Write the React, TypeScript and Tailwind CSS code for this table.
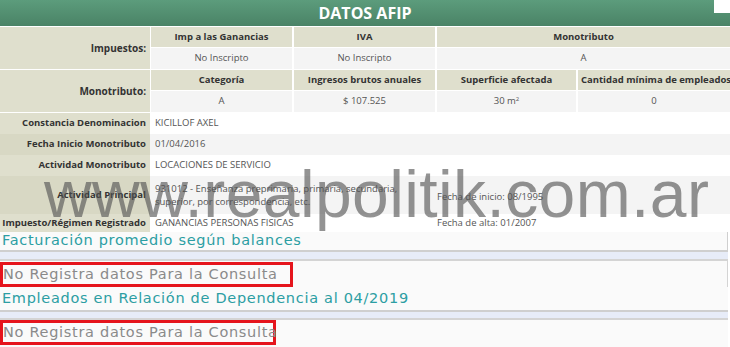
import React from "react";

const beige = "bg-[#dfdfcd]";
const beigeDark = "bg-[#d8d8c4]";

const HeadCell = ({ children }: { children: React.ReactNode }) => (
  <div className={`${beige} h-[20px] flex items-center justify-center font-bold text-[#333] whitespace-nowrap overflow-hidden`}>
    {children}
  </div>
);

const ValCell = ({ children }: { children: React.ReactNode }) => (
  <div className="bg-[#f4f4f4] h-[21px] flex items-center justify-center text-[#555] whitespace-nowrap">
    {children}
  </div>
);

const InfoRow = ({
  label,
  dark,
  grey,
  h,
  children,
}: {
  label: string;
  dark?: boolean;
  grey?: boolean;
  h: string;
  children: React.ReactNode;
}) => (
  <div className={`flex ${h}`}>
    <div className={`w-[150px] shrink-0 ${dark ? beigeDark : beige} flex items-center justify-end pr-[4px] font-bold text-[#333] whitespace-nowrap`}>
      {label}
    </div>
    <div className={`flex-1 pl-[5px] flex items-center text-[#555] ${grey ? "bg-[#f4f4f4]" : "bg-white"}`}>
      {children}
    </div>
  </div>
);

const NoData = ({ w }: { w: string }) => (
  <div className={`${w} h-[25px] border-[3px] border-[#e5141c] flex items-center whitespace-nowrap overflow-visible text-[#8a8a8a]`}>
    No Registra datos Para la Consulta
  </div>
);

const App = () => {
  return (
    <div className="relative w-[730px] h-[347px] overflow-hidden bg-white">
      {/* header */}
      <div className="relative h-[26px] bg-gradient-to-b from-[#5c9c7c] to-[#4a8366] flex items-center justify-center">
        <span className="text-white font-bold text-[16px] font-['Open_Sans',sans-serif]">DATOS AFIP</span>
        <div className="absolute right-0 top-0 w-[16px] h-[13px] bg-white" />
      </div>

      <div className="font-['Open_Sans',sans-serif] text-[9.5px] pt-[1px] flex flex-col gap-[1px]">
        {/* Impuestos */}
        <div className="flex gap-[1px]">
          <div className={`w-[150px] shrink-0 ${beige} flex items-center justify-end pr-[4px] font-bold text-[10px] text-[#333]`}>
            Impuestos:
          </div>
          <div className="flex-1 grid grid-cols-[141px_141px_1fr] gap-x-[2px] gap-y-[1px]">
            <HeadCell>Imp a las Ganancias</HeadCell>
            <HeadCell>IVA</HeadCell>
            <HeadCell>Monotributo</HeadCell>
            <ValCell>No Inscripto</ValCell>
            <ValCell>No Inscripto</ValCell>
            <ValCell>A</ValCell>
          </div>
        </div>

        {/* Monotributo */}
        <div className="flex gap-[1px]">
          <div className={`w-[150px] shrink-0 ${beige} flex items-center justify-end pr-[4px] font-bold text-[10px] text-[#333]`}>
            Monotributo:
          </div>
          <div className="flex-1 grid grid-cols-[141px_141px_139px_1fr] gap-x-[2px] gap-y-[1px]">
            <HeadCell>Categoría</HeadCell>
            <HeadCell>Ingresos brutos anuales</HeadCell>
            <HeadCell>Superficie afectada</HeadCell>
            <HeadCell>
              <span className="pl-[4px]">Cantidad mínima de empleados</span>
            </HeadCell>
            <ValCell>A</ValCell>
            <ValCell>$ 107.525</ValCell>
            <ValCell>
              <span>
                30 m<sup className="text-[6px]">2</sup>
              </span>
            </ValCell>
            <ValCell>0</ValCell>
          </div>
        </div>

        <div className="flex flex-col">
          <InfoRow label="Constancia Denominacion" h="h-[21px]">KICILLOF AXEL</InfoRow>
          <InfoRow label="Fecha Inicio Monotributo" h="h-[21px]" dark grey>01/04/2016</InfoRow>
          <InfoRow label="Actividad Monotributo" h="h-[21px]">LOCACIONES DE SERVICIO</InfoRow>
          <InfoRow label="Actividad Principal" h="h-[38px]" dark grey>
            <div className="w-[277px] leading-[13px]">
              931012 - Enseñanza preprimaria, primaria, secundaria, superior, por correspondencia, etc.
            </div>
            <div className="pl-[5px] pt-[4px]">Fecha de inicio: 08/1995</div>
          </InfoRow>
          <InfoRow label="Impuesto/Régimen Registrado" h="h-[18px]">
            <div className="w-[277px]">GANANCIAS PERSONAS FISICAS</div>
            <div className="pl-[5px]">Fecha de alta: 01/2007</div>
          </InfoRow>
        </div>
      </div>

      {/* lower panels */}
      <div className="w-[728px] font-['DejaVu_Sans',sans-serif] text-[14.5px] tracking-[0.7px]">
        <div className="h-[20px] bg-[#fafafa] border-b-2 border-r border-[#cfcfcf] pl-[2px] flex items-center text-[#2c9ea3]">
          Facturación promedio según balances
        </div>
        <div className="h-[7px] bg-[#e7ecf8]" />
        <div className="h-[28px] bg-[#fafafa] border-t-2 border-r border-[#d4d4d4] pt-[1px]">
          <NoData w="w-[293px]" />
        </div>
        <div className="h-[25px] bg-[#fafafa] border-b-2 border-[#cfcfcf] pl-[2px] flex items-center text-[#2c9ea3]">
          Empleados en Relación de Dependencia al 04/2019
        </div>
        <div className="h-[6px] bg-[#e7ecf8]" />
        <div className="h-[30px] bg-[#fafafa] border-t-2 border-[#d4d4d4]">
          <NoData w="w-[276px]" />
        </div>
      </div>

      {/* watermark */}
      <div className="pointer-events-none absolute left-[44px] top-[161px] text-[66px] leading-none tracking-[0.4px] font-['Liberation_Sans',Arial,sans-serif] text-[rgba(80,80,80,0.62)] whitespace-nowrap">
        www.realpolitik.com.ar
      </div>
    </div>
  );
};

export default App;
